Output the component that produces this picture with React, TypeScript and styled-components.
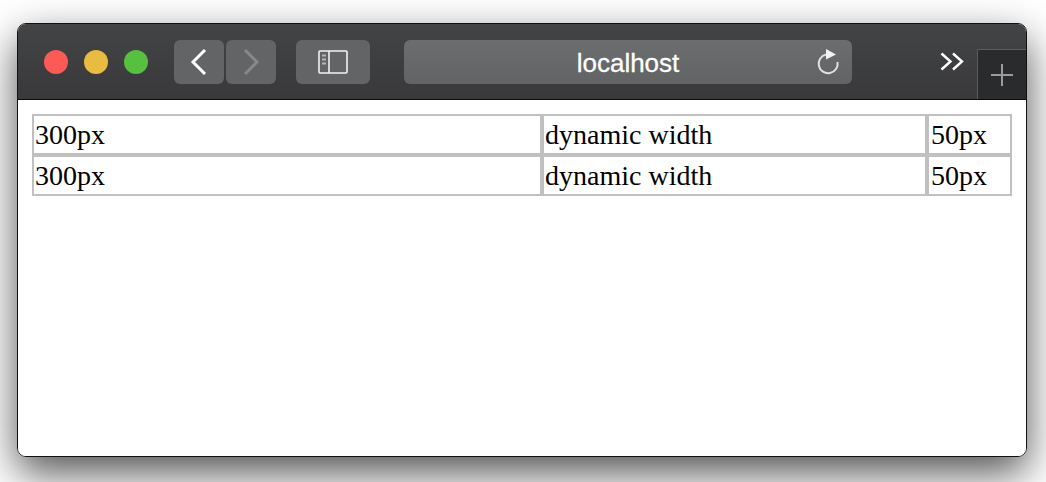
import React from "react";
import styled, { createGlobalStyle } from "styled-components";

const Global = createGlobalStyle`
  html, body { margin: 0; padding: 0; background: #fff; }
  body { width: 1046px; height: 482px; overflow: hidden; }
`;

const Stage = styled.div`
  box-sizing: border-box;
  width: 1046px;
  height: 482px;
  padding: 23px 19px 25px 17px;
`;

const Window = styled.div`
  box-sizing: border-box;
  height: 100%;
  display: flex;
  flex-direction: column;
  border: 1px solid #111;
  border-radius: 9px;
  overflow: hidden;
  background: #fff;
`;

const Shadow = styled.div`
  height: 100%;
  border-radius: 9px;
  box-shadow: 0 16px 42px rgba(0, 0, 0, 0.68);
`;

const Toolbar = styled.div`
  box-sizing: border-box;
  flex: none;
  height: 76px;
  display: flex;
  align-items: flex-start;
  padding: 16px 0 0 26px;
  background: linear-gradient(#434446, #39393c);
  border-bottom: 1px solid #0c0c0c;
`;

const Lights = styled.div`
  display: flex;
  gap: 16px;
  margin-top: 10px;
`;

const Light = styled.span<{ $c: string }>`
  width: 24px;
  height: 24px;
  border-radius: 50%;
  background: ${(p) => p.$c};
`;

const Nav = styled.div`
  display: flex;
  gap: 2px;
  margin-left: 26px;
`;

const ToolButton = styled.div<{ $w: number }>`
  width: ${(p) => p.$w}px;
  height: 44px;
  display: flex;
  align-items: center;
  justify-content: center;
  border-radius: 6px;
  background: #636466;
`;

const SidebarSlot = styled.div`
  margin-left: 20px;
`;

const Address = styled.div`
  position: relative;
  width: 448px;
  height: 44px;
  margin-left: 34px;
  display: flex;
  align-items: center;
  justify-content: center;
  border-radius: 6px;
  background: linear-gradient(#6c6d6f, #626365);
  color: #fff;
  font: 26px/1 "Liberation Sans", Arial, sans-serif;
  padding-top: 2px;
  box-sizing: border-box;
  -webkit-text-stroke: 0.3px #fff;
`;

const Reload = styled.svg`
  position: absolute;
  right: 11px;
  top: 8px;
`;

const More = styled.svg`
  margin: 12px 0 0 88px;
`;

const NewTab = styled.div`
  box-sizing: border-box;
  width: 49px;
  height: 50px;
  margin: 9px 0 0 13px;
  padding-right: 1px;
  display: flex;
  align-items: center;
  justify-content: center;
  background: #2a2b2c;
  border-left: 1px solid #5c5d5f;
  border-top: 1px solid #5c5d5f;
`;

const Page = styled.div`
  flex: 1;
  padding: 14px 14px 0 14px;
  background: #fff;
`;

const Table = styled.table`
  width: 980px;
  table-layout: fixed;
  border-collapse: separate;
  border-spacing: 0;
  font: 28px/1 "Liberation Serif", "Times New Roman", serif;
  color: #000;
`;

const Cell = styled.td`
  box-sizing: border-box;
  height: 41px;
  padding: 1px 1px 0 2px;
  border: 2px solid #c0c0c0;
  white-space: nowrap;
`;

const FirstCell = styled(Cell)`
  padding-left: 1px;
`;

const rows = [0, 1];

export default function App() {
  return (
    <Stage>
      <Global />
      <Shadow>
        <Window>
          <Toolbar>
            <Lights>
              <Light $c="#fc5a55" />
              <Light $c="#e9bb41" />
              <Light $c="#56c03f" />
            </Lights>
            <Nav>
              <ToolButton $w={50}>
                <svg width="20" height="28" viewBox="0 0 20 28" fill="none" stroke="#fff" strokeWidth="3">
                  <path d="M16 2 L4 14 L16 26" />
                </svg>
              </ToolButton>
              <ToolButton $w={50}>
                <svg width="20" height="28" viewBox="0 0 20 28" fill="none" stroke="#87888a" strokeWidth="3">
                  <path d="M4 2 L16 14 L4 26" />
                </svg>
              </ToolButton>
            </Nav>
            <SidebarSlot>
              <ToolButton $w={74}>
                <svg width="30" height="24" viewBox="0 0 30 24" fill="none" stroke="#f2f2f2" strokeWidth="1.6">
                  <rect x="1" y="1" width="28" height="22" rx="1" />
                  <path d="M11 1 V23" />
                  <path d="M4 5.5 H8 M4 9.5 H8 M4 13.5 H8" stroke="#b5b6b7" strokeWidth="1.8" />
                </svg>
              </ToolButton>
            </SidebarSlot>
            <Address>
              localhost
              <Reload width="26" height="28" viewBox="0 0 26 28" fill="none">
                <path d="M11 6.5 A9.5 9.5 0 1 0 22.5 14" stroke="#e2e2e2" strokeWidth="2" />
                <path d="M11 1 L21 6.5 L11 11.5 Z" fill="#f2f2f2" />
              </Reload>
            </Address>
            <More width="24" height="20" viewBox="0 0 24 20" fill="none" stroke="#fff" strokeWidth="2.4">
              <path d="M1.5 1.5 L10.5 9.5 L1.5 17.5" />
              <path d="M13 1.5 L22 9.5 L13 17.5" />
            </More>
            <NewTab>
              <svg width="24" height="24" viewBox="0 0 24 24" stroke="#9a9b9c" strokeWidth="2">
                <path d="M12 1 V23 M1 12 H23" />
              </svg>
            </NewTab>
          </Toolbar>
          <Page>
            <Table>
              <colgroup>
                <col style={{ width: 510 }} />
                <col style={{ width: 385 }} />
                <col style={{ width: 85 }} />
              </colgroup>
              <tbody>
                {rows.map((r) => (
                  <tr key={r}>
                    <FirstCell>300px</FirstCell>
                    <FirstCell>dynamic width</FirstCell>
                    <Cell>50px</Cell>
                  </tr>
                ))}
              </tbody>
            </Table>
          </Page>
        </Window>
      </Shadow>
    </Stage>
  );
}
